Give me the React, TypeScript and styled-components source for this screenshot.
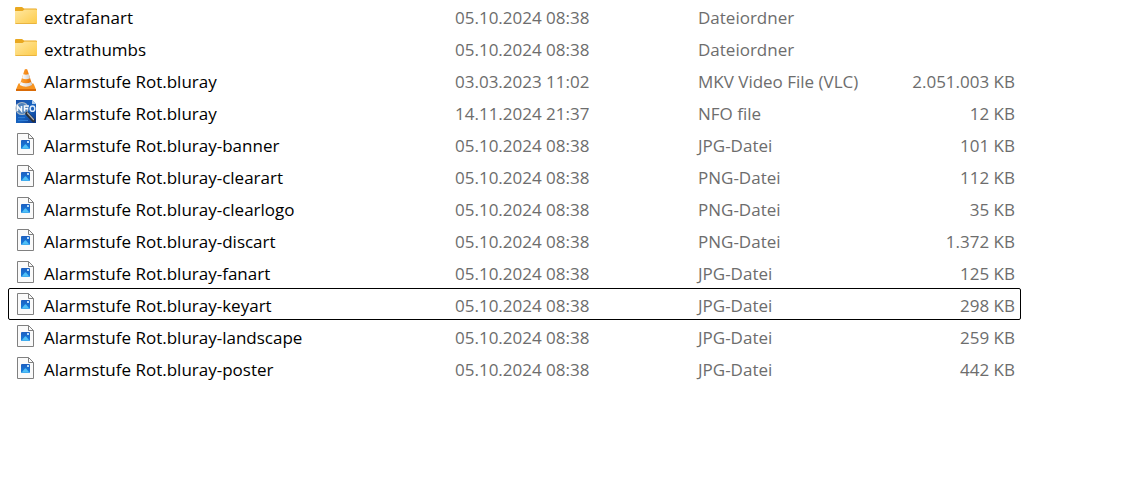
import React from "react";
import styled, { createGlobalStyle, css } from "styled-components";

const GlobalStyle = createGlobalStyle`
  * { box-sizing: border-box; }
  body {
    margin: 0;
    background: #ffffff;
    font-family: "Open Sans", "Noto Sans", sans-serif;
    font-size: 17px;
    line-height: 24px;
  }
`;

const Pane = styled.main`
  padding: 0 108px 0 8px;
`;

const FileTable = styled.table`
  width: 100%;
  table-layout: fixed;
  border-collapse: separate;
  border-spacing: 0;
`;

const Column = styled.col<{ $width?: number }>`
  ${({ $width }) => $width && css`width: ${$width}px;`}
`;

const FileRow = styled.tr<{ $focused: boolean }>`
  height: 32px;
  ${({ $focused }) =>
    $focused &&
    css`
      outline: 1px solid #000000;
      outline-offset: -1px;
      border-radius: 2px;
    `}
`;

const Cell = styled.td<{ $align?: "right" }>`
  padding: 4px 6px 0;
  color: #6d6d6d;
  white-space: nowrap;
  text-align: ${({ $align }) => $align ?? "left"};
`;

const NameCell = styled(Cell)`
  padding-left: 7px;
  color: #000000;
`;

const FileName = styled.span`
  display: flex;
  align-items: center;
  gap: 6px;
`;

const Icon = styled.svg`
  flex: none;
  display: block;
  width: 23px;
  height: 26px;
  margin: -4px 0 0;
`;

type Kind = "folder" | "video" | "nfo" | "image";

function FolderIcon() {
  return (
    <Icon viewBox="0 0 23 26" aria-hidden="true">
      <defs>
        <linearGradient id="folder" x1="0" y1="0" x2="1" y2="1">
          <stop offset="0" stopColor="#ffe8a3" />
          <stop offset="1" stopColor="#fdcb48" />
        </linearGradient>
      </defs>
      <path d="M0 5q0-1 1-1h6l2 1.500h12q1 0 1 1V12H0z" fill="#e9a820" />
      <path d="M0 8h7.500L9.500 6.500H21q1 0 1 1V20q0 1-1 1H1q-1 0-1-1z" fill="url(#folder)" />
      <path d="M.5 20.500h21" stroke="#e9b440" />
    </Icon>
  );
}

function VideoIcon() {
  return (
    <Icon viewBox="0 0 23 26" aria-hidden="true">
      <defs>
        <linearGradient id="cone" x1="0" y1="0" x2="1" y2="0">
          <stop offset="0" stopColor="#fba43a" />
          <stop offset=".5" stopColor="#f68c1a" />
          <stop offset="1" stopColor="#dc6c06" />
        </linearGradient>
        <linearGradient id="stripe" x1="0" y1="0" x2="1" y2="0">
          <stop offset="0" stopColor="#ffffff" />
          <stop offset="1" stopColor="#cfcfcf" />
        </linearGradient>
      </defs>
      <path d="M3.500 16.500h15l2.500 6H1z" fill="#f7941f" />
      <path d="M1 22h20v2H1z" fill="#d96b08" />
      <path d="M9.700 2.500q1.300-.8 2.600 0L17.300 18q-6.300 4-12.600 0z" fill="url(#cone)" />
      <path d="M8.300 7q2.700 1.300 5.400 0l1.300 4.200q-4 2-8 0z" fill="url(#stripe)" />
      <path d="M5.700 15q5.300 2.600 10.600 0l.9 3q-6.200 3.300-12.400 0z" fill="url(#stripe)" />
    </Icon>
  );
}

function NfoIcon() {
  return (
    <Icon viewBox="0 0 23 26" aria-hidden="true">
      <defs>
        <linearGradient id="nfo" x1="0" y1="0" x2="1" y2="1">
          <stop offset="0" stopColor="#1850a8" />
          <stop offset=".55" stopColor="#1763c0" />
          <stop offset="1" stopColor="#0c3688" />
        </linearGradient>
      </defs>
      <path d="M1 1h16l4 4v19H1z" fill="url(#nfo)" />
      <path d="M17 1v4h4z" fill="#b5d2f0" />
      <circle cx="7" cy="9.500" r="6" fill="#4d82bd" stroke="#aab7c4" strokeWidth="1.200" />
      <path
        d="M2.500 12V7l4 5V7M9.500 12.500V7h4.500M9.500 9.700H13"
        fill="none"
        stroke="#f4f8fc"
        strokeWidth="1.600"
      />
      <ellipse cx="17.500" cy="9.700" rx="2.300" ry="2.600" fill="none" stroke="#dceafa" strokeWidth="1.500" />
      <path d="M12 14.500l6.500 7" stroke="#2a3038" strokeWidth="3.600" strokeLinecap="round" />
      <path d="M12.500 14l6 6.500" stroke="#a8adb3" strokeWidth="1.200" strokeLinecap="round" />
      <path d="M3 18.500h7M3 21.500h10" stroke="#2e7cd4" />
    </Icon>
  );
}

function ImageIcon() {
  return (
    <Icon viewBox="0 0 23 26" aria-hidden="true">
      <defs>
        <linearGradient id="photo" x1="0" y1="0" x2="0" y2="1">
          <stop offset="0" stopColor="#1c5fc0" />
          <stop offset="1" stopColor="#147fe0" />
        </linearGradient>
      </defs>
      <path d="M2.500 2.500h11l5 5v16h-16z" fill="#fafafa" stroke="#808080" />
      <path d="M13.500 2.500v5h5" fill="none" stroke="#808080" />
      <rect x="6" y="9" width="9" height="9" rx="1" fill="url(#photo)" />
      <path d="M6.500 17.700l3.200-4q.8-.9 1.600 0l3.200 4z" fill="#50bff5" />
      <rect x="12" y="10" width="2" height="2" fill="#b8dcfa" />
    </Icon>
  );
}

const icons: Record<Kind, () => React.JSX.Element> = {
  folder: FolderIcon,
  video: VideoIcon,
  nfo: NfoIcon,
  image: ImageIcon,
};

interface Entry {
  kind: Kind;
  name: string;
  date: string;
  type: string;
  size: string;
}

const saved = "05.10.2024 08:38";
const title = "Alarmstufe Rot.bluray";

const entries: Entry[] = [
  { kind: "folder", name: "extrafanart", date: saved, type: "Dateiordner", size: "" },
  { kind: "folder", name: "extrathumbs", date: saved, type: "Dateiordner", size: "" },
  { kind: "video", name: title, date: "03.03.2023 11:02", type: "MKV Video File (VLC)", size: "2.051.003 KB" },
  { kind: "nfo", name: title, date: "14.11.2024 21:37", type: "NFO file", size: "12 KB" },
  { kind: "image", name: `${title}-banner`, date: saved, type: "JPG-Datei", size: "101 KB" },
  { kind: "image", name: `${title}-clearart`, date: saved, type: "PNG-Datei", size: "112 KB" },
  { kind: "image", name: `${title}-clearlogo`, date: saved, type: "PNG-Datei", size: "35 KB" },
  { kind: "image", name: `${title}-discart`, date: saved, type: "PNG-Datei", size: "1.372 KB" },
  { kind: "image", name: `${title}-fanart`, date: saved, type: "JPG-Datei", size: "125 KB" },
  { kind: "image", name: `${title}-keyart`, date: saved, type: "JPG-Datei", size: "298 KB" },
  { kind: "image", name: `${title}-landscape`, date: saved, type: "JPG-Datei", size: "259 KB" },
  { kind: "image", name: `${title}-poster`, date: saved, type: "JPG-Datei", size: "442 KB" },
];

export default function App() {
  return (
    <>
      <GlobalStyle />
      <Pane>
        <FileTable>
          <colgroup>
            <Column />
            <Column $width={243} />
            <Column $width={192} />
            <Column $width={137} />
          </colgroup>
          <tbody>
            {entries.map((entry) => {
              const EntryIcon = icons[entry.kind];
              return (
                <FileRow key={entry.kind + entry.name} $focused={entry.name === `${title}-keyart`}>
                  <NameCell>
                    <FileName>
                      <EntryIcon />
                      {entry.name}
                    </FileName>
                  </NameCell>
                  <Cell>{entry.date}</Cell>
                  <Cell>{entry.type}</Cell>
                  <Cell $align="right">{entry.size}</Cell>
                </FileRow>
              );
            })}
          </tbody>
        </FileTable>
      </Pane>
    </>
  );
}
